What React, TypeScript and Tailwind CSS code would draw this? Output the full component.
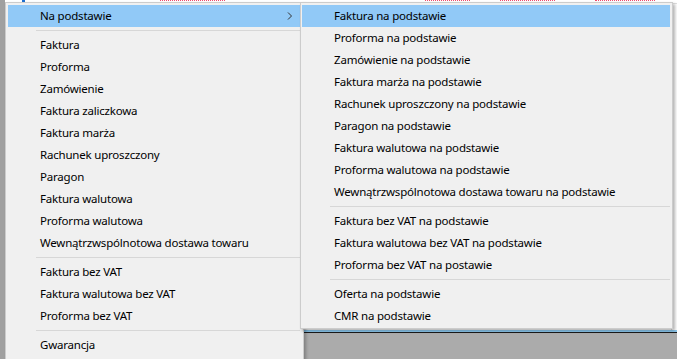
type Entry = { label: string } | "sep";

const mainItems: Entry[] = [
    "sep",
    { label: "Faktura" },
    { label: "Proforma" },
    { label: "Zamówienie" },
    { label: "Faktura zaliczkowa" },
    { label: "Faktura marża" },
    { label: "Rachunek uproszczony" },
    { label: "Paragon" },
    { label: "Faktura walutowa" },
    { label: "Proforma walutowa" },
    { label: "Wewnątrzwspólnotowa dostawa towaru" },
    "sep",
    { label: "Faktura bez VAT" },
    { label: "Faktura walutowa bez VAT" },
    { label: "Proforma bez VAT" },
    "sep",
    { label: "Gwarancja" },
];

const subItems: Entry[] = [
    { label: "Faktura na podstawie" },
    { label: "Proforma na podstawie" },
    { label: "Zamówienie na podstawie" },
    { label: "Faktura marża na podstawie" },
    { label: "Rachunek uproszczony na podstawie" },
    { label: "Paragon na podstawie" },
    { label: "Faktura walutowa na podstawie" },
    { label: "Proforma walutowa na podstawie" },
    { label: "Wewnątrzwspólnotowa dostawa towaru na podstawie" },
    "sep",
    { label: "Faktura bez VAT na podstawie" },
    { label: "Faktura walutowa bez VAT na podstawie" },
    { label: "Proforma bez VAT na postawie" },
    "sep",
    { label: "Oferta na podstawie" },
    { label: "CMR na podstawie" },
];

function MenuList({ items, active }: { items: Entry[]; active?: string }) {
    return (
        <>
            {items.map((item, i) =>
                item === "sep" ? (
                    <div key={i} className="h-[7px] flex items-center pl-[28px]">
                        <div className="h-px w-full bg-[#d7d7d7]" />
                    </div>
                ) : (
                    <div
                        key={i}
                        className={`h-[22px] flex items-center pl-[32px] whitespace-nowrap ${
                            item.label === active ? "bg-[#91c9f7]" : ""
                        }`}
                    >
                        {item.label}
                    </div>
                )
            )}
        </>
    );
}

export default function App() {
    return (
        <div
            className="relative w-[677px] h-[359px] overflow-hidden bg-[#ababab] text-[11.5px] tracking-[-0.2px] text-black"
            style={{ fontFamily: '"Segoe UI", "Noto Sans", sans-serif' }}
        >
            {/* window behind the menus */}
            <div className="flex h-full">
                <div className="w-[5px] bg-[#a0a0a0]" />
                <div className="flex-1 flex flex-col">
                    <div className="h-[330px] bg-white flex flex-col">
                        <div className="h-[4px] flex items-start border-b border-[#e0e0e0]">
                            <div className="w-[17px]" />
                            <div className="w-[3px] h-full bg-[#1e6fd0]" />
                            <div className="w-[135px]" />
                            <div className="w-[65px] border-t border-dotted border-[#f04a6a]" />
                            <div className="w-[200px]" />
                            <div className="w-[45px] border-t border-dotted border-[#f04a6a]" />
                            <div className="w-[30px]" />
                            <div className="w-[55px] border-t border-dotted border-[#f04a6a]" />
                            <div className="w-[40px]" />
                            <div className="w-[60px] border-t border-dotted border-[#f04a6a]" />
                        </div>
                        <div className="flex-1 flex justify-end">
                            <div className="w-[6px] border-l border-[#dcdcdc]" />
                        </div>
                    </div>
                    <div className="h-[2px] bg-[#8cc8ee]" />
                    <div className="h-px bg-[#1a1a1a]" />
                    <div className="flex-1 bg-[#ababab]" />
                </div>
            </div>

            {/* main context menu */}
            <div className="absolute left-[5px] top-[2px] w-[299px] h-[358px] bg-[#f0f0f0] border border-[#cccccc] pt-[2px] pl-[2px] pr-[3px] shadow-[2px_2px_3px_rgba(0,0,0,0.25)]">
                <div className="h-[22px] flex items-center pl-[32px] bg-[#91c9f7] relative">
                    Na podstawie
                    <svg
                        className="absolute left-[279px] top-[7px]"
                        width="6"
                        height="8"
                        viewBox="0 0 6 8"
                        fill="none"
                        stroke="#333"
                        strokeWidth={1}
                    >
                        <path d="M1 0.5l3.5 3.5L1 7.5" />
                    </svg>
                </div>
                <MenuList items={mainItems} />
            </div>

            {/* submenu */}
            <div className="absolute left-[300px] top-[2px] w-[373px] bg-[#f0f0f0] border border-[#cccccc] pt-[2px] pb-[1px] pl-px pr-[2px] shadow-[2px_2px_3px_rgba(0,0,0,0.3)]">
                <MenuList items={subItems} active="Faktura na podstawie" />
            </div>
        </div>
    );
}
